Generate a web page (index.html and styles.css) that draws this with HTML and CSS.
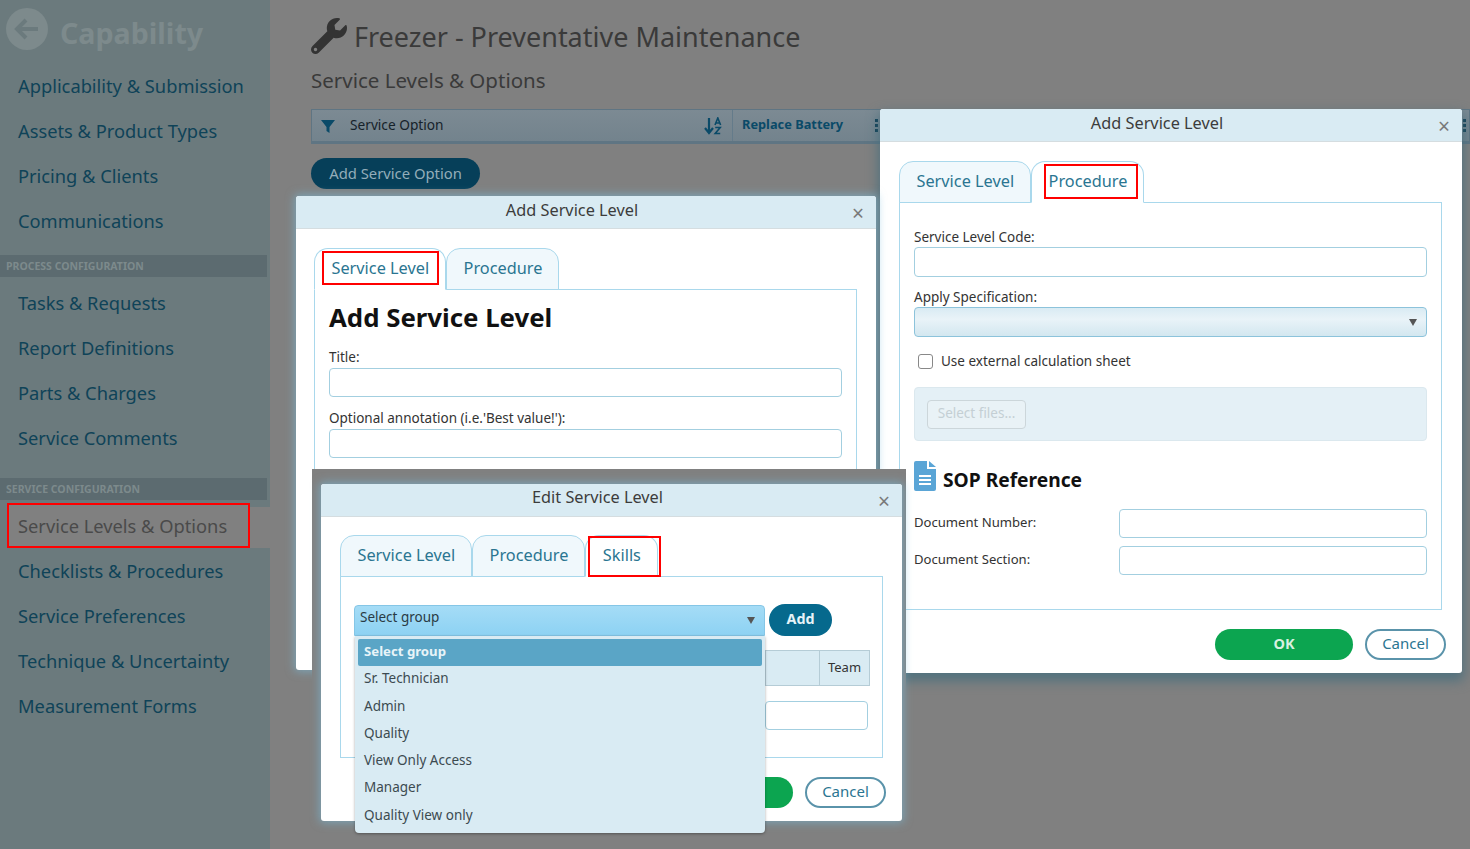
FILE: index.html
```html
<!DOCTYPE html>
<html lang="en">
<head>
<meta charset="utf-8">
<title>Service Levels &amp; Options</title>
<link rel="stylesheet" href="styles.css">
</head>
<body>
<div class="page">
  <aside class="sidebar">
    <div class="brand">
      <svg class="back" viewBox="0 0 42 42" width="42" height="42"><circle cx="21" cy="21" r="21" fill="#7d8a8c"/><path d="M32 21H12M20 12l-9 9 9 9" fill="none" stroke="#6b7a7d" stroke-width="4"/></svg>
      <span class="brand-name">Capability</span>
    </div>
    <nav class="nav-group first">
      <a class="nav-item">Applicability &amp; Submission</a>
      <a class="nav-item">Assets &amp; Product Types</a>
      <a class="nav-item">Pricing &amp; Clients</a>
      <a class="nav-item">Communications</a>
    </nav>
    <div class="nav-head">PROCESS CONFIGURATION</div>
    <nav class="nav-group">
      <a class="nav-item">Tasks &amp; Requests</a>
      <a class="nav-item">Report Definitions</a>
      <a class="nav-item">Parts &amp; Charges</a>
      <a class="nav-item">Service Comments</a>
    </nav>
    <div class="nav-head">SERVICE CONFIGURATION</div>
    <nav class="nav-group">
      <a class="nav-item current">Service Levels &amp; Options</a>
      <a class="nav-item">Checklists &amp; Procedures</a>
      <a class="nav-item">Service Preferences</a>
      <a class="nav-item">Technique &amp; Uncertainty</a>
      <a class="nav-item">Measurement Forms</a>
    </nav>
  </aside>
  <main class="main">
    <h1 class="title">
      <svg viewBox="0 0 512 512" width="36" height="36"><path fill="#333" d="M507.73 109.1c-2.24-9.03-13.54-12.09-20.12-5.51l-74.36 74.36-67.88-11.31-11.31-67.88 74.36-74.36c6.62-6.62 3.43-17.9-5.66-20.16-47.38-11.74-99.55.91-136.58 37.93-39.64 39.64-50.55 97.1-34.05 147.2L18.74 402.76c-24.99 24.99-24.99 65.51 0 90.5 24.99 24.99 65.51 24.99 90.5 0l213.21-213.21c50.12 16.71 107.47 5.68 147.37-34.22 37.07-37.07 49.7-89.32 37.91-136.73zM64 472c-13.25 0-24-10.75-24-24 0-13.26 10.75-24 24-24s24 10.74 24 24c0 13.25-10.75 24-24 24z"/></svg>
      <span>Freezer - Preventative Maintenance</span>
    </h1>
    <h2 class="subtitle">Service Levels &amp; Options</h2>
    <div class="grid-head">
      <svg viewBox="0 0 16 16" width="16" height="16"><path d="M1 2h14L9.500 9v6l-3-2V9z" fill="#0a4a68"/></svg>
      <span class="grid-col">Service Option</span>
      <svg class="sort" viewBox="0 0 18 18" width="18" height="18"><path d="M5 1v14M1 11l4 5 4-5" fill="none" stroke="#0a4a68" stroke-width="2.200"/><path d="M11 8l2.800-7 2.800 7M12 6h3.600M11.200 10.500h5l-5 6h5" fill="none" stroke="#0a4a68" stroke-width="1.600"/></svg>
      <span class="grid-val"><span class="val-text">Replace Battery</span>
        <svg class="kebab" viewBox="0 0 3 14" width="3" height="14"><path d="M0 0h3v3H0zM0 5h3v3H0zM0 10h3v3H0z" fill="#0a3a50"/></svg>
      </span>
      <svg class="kebab end" viewBox="0 0 3 14" width="3" height="14"><path d="M0 0h3v3H0zM0 5h3v3H0zM0 10h3v3H0z" fill="#0a3a50"/></svg>
    </div>
    <button class="primary">Add Service Option</button>
  </main>

  <section class="window win-right">
    <header class="win-title">Add Service Level<span class="close">×</span></header>
    <div class="win-body">
      <div class="tabs">
        <span class="tab">Service Level</span>
        <span class="tab active">Procedure<i class="mark mark-proc"></i></span>
      </div>
      <div class="panel">
        <label class="lbl">Service Level Code:</label>
        <div class="input"></div>
        <label class="lbl">Apply Specification:</label>
        <div class="select"><i class="caret"></i></div>
        <div class="check"><i class="box"></i>Use external calculation sheet</div>
        <div class="upload"><span class="upload-btn">Select files...</span></div>
        <div class="sop">
          <svg viewBox="0 0 22 30" width="22" height="30"><path d="M2 0h11v8h9v20a2 2 0 0 1-2 2H2a2 2 0 0 1-2-2V2a2 2 0 0 1 2-2z" fill="#5aa5d6"/><path d="M15 0l7 6h-7z" fill="#5aa5d6"/><path d="M5 15h12M5 19h12M5 23h12" stroke="#fff" stroke-width="1.800"/></svg>
          <h3>SOP Reference</h3>
        </div>
        <div class="row"><label>Document Number:</label><div class="input"></div></div>
        <div class="row"><label>Document Section:</label><div class="input"></div></div>
      </div>
      <div class="actions">
        <button class="ok">OK</button>
        <button class="cancel">Cancel</button>
      </div>
    </div>
  </section>

  <section class="window win-left">
    <header class="win-title">Add Service Level<span class="close">×</span></header>
    <div class="win-body">
      <div class="tabs">
        <span class="tab active">Service Level<i class="mark mark-level"></i></span>
        <span class="tab">Procedure</span>
      </div>
      <div class="panel">
        <h2 class="panel-title">Add Service Level</h2>
        <label class="lbl">Title:</label>
        <div class="input"></div>
        <label class="lbl">Optional annotation (i.e.'Best value!'):</label>
        <div class="input"></div>
      </div>
    </div>
  </section>

  <div class="patch"></div>

  <section class="window win-edit">
    <header class="win-title">Edit Service Level<span class="close">×</span></header>
    <div class="win-body">
      <div class="tabs">
        <span class="tab">Service Level</span>
        <span class="tab">Procedure</span>
        <span class="tab active">Skills<i class="mark mark-skills"></i></span>
      </div>
      <div class="panel skills">
        <div class="skill-row">
          <div class="select open">Select group<i class="caret"></i></div>
          <button class="add">Add</button>
        </div>
        <div class="team-head"><span>Team</span></div>
        <div class="input team-input"></div>
      </div>
      <div class="actions">
        <button class="ok">OK</button>
        <button class="cancel">Cancel</button>
      </div>
    </div>
    <ul class="dropdown">
      <li class="on">Select group</li>
      <li>Sr. Technician</li>
      <li>Admin</li>
      <li>Quality</li>
      <li>View Only Access</li>
      <li>Manager</li>
      <li>Quality View only</li>
    </ul>
  </section>
</div>
</body>
</html>
```
FILE: styles.css
```css
* { box-sizing: border-box; }
html, body { margin: 0; height: 100%; overflow: hidden; }
body { font-family: "Noto Sans", "Open Sans", sans-serif; background: #808080; color: #333; }
.page { position: relative; display: flex; width: 1470px; height: 849px; overflow: hidden; }

.sidebar { width: 270px; height: 849px; background: #6b7a7d; flex: none; }
.brand { display: flex; align-items: center; gap: 12px; height: 63px; padding: 0 0 0 6px; }
.back { margin-top: -6px; }
.brand-name { font-size: 28.600px; font-weight: 700; color: #7d8a8c; margin-top: 1px; }
.nav-group { display: flex; flex-direction: column; margin-bottom: 18px; }
.nav-group.first { margin-bottom: 12px; }
.nav-item { display: flex; align-items: center; height: 45px; padding-left: 18px; font-size: 18.300px; color: #0f4358; white-space: nowrap; }
.nav-item.current { background: #808080; color: #4a4a4a; outline: 2px solid #f00; outline-offset: -2px; margin-left: 7px; padding-left: 11px; width: 243px; position: relative; }
.nav-item.current::after { content: ""; position: absolute; left: 243px; top: 4px; width: 20px; height: 41px; background: #808080; }
.nav-head { height: 22px; width: 267px; margin-bottom: 3px; background: #5c6b70; color: #7d8a8c; font-size: 10.500px; font-weight: 700; padding-left: 6px; line-height: 22px; }

.main { flex: 1; min-width: 0; padding: 16px 0 0 41px; }
.title { display: flex; align-items: center; gap: 7px; margin: 0; height: 40px; font-size: 27px; font-weight: 400; color: #3a3a3a; }
.subtitle { margin: 9px 0 14px; font-size: 20.500px; line-height: 30px; font-weight: 400; color: #3a3a3a; }
.grid-head { display: flex; align-items: center; height: 35px; padding-left: 8px; border: 1px solid #5f7583; border-bottom-width: 3px; background: linear-gradient(#7c8a93, #73838d); font-size: 13.700px; color: #16222a; }
.grid-col { margin-left: 14px; width: 354px; padding-bottom: 2px; }
.sort { flex: none; width: 18px; margin-right: 10px; }
.grid-val { position: relative; flex: none; width: 146px; border-left: 1px solid #647b8a; height: 100%; display: flex; align-items: center; justify-content: space-between; padding: 0 0 0 9px; font-weight: 700; font-size: 12.800px; color: #0a4a68; }
.val-text { padding-bottom: 4px; }
.kebab { flex: none; }
.kebab.end { margin-left: auto; margin-right: 3px; }
.primary { display: block; margin-top: 14px; width: 169px; height: 31px; padding-bottom: 3px; border: 0; border-radius: 16px; background: #063f59; color: #93adb9; font: 400 14.800px "Noto Sans", sans-serif; }

.window { position: absolute; width: 581px; background: #fff; border-radius: 3px; box-shadow: 0 0 8px 2px rgba(120, 190, 220, .55); }
.win-right { left: 880px; top: 109px; width: 582px; height: 564px; box-shadow: 0 6px 12px 2px rgba(70, 110, 125, .8); }
.win-left { left: 296px; top: 196px; width: 580px; height: 474px; }
.win-edit { left: 321px; top: 484px; height: 337px; }
.patch { position: absolute; left: 312px; top: 469px; width: 594px; height: 369px; background: #808080; }

.win-title { position: relative; height: 33px; padding-right: 28px; background: #d9ebf3; border-bottom: 1px solid #d5dde0; text-align: center; font-size: 16.300px; line-height: 28px; color: #3c3c3c; border-radius: 3px 3px 0 0; }
.win-edit .win-title { line-height: 26px; }
.close { position: absolute; right: 12px; top: 3px; font-size: 21px; color: #7a7a7a; line-height: 29px; }
.win-body { padding: 19px 19px 0 18px; }
.win-right .win-body { padding: 19px 20px 0 19px; }
.win-edit .win-body { padding: 18px 19px 0 19px; }
.tabs { display: flex; height: 42px; position: relative; z-index: 1; }
.tab { position: relative; display: flex; align-items: center; height: 42px; padding: 0 16px 3px 16.500px; border: 1px solid #a9d8ec; border-radius: 14px 14px 0 0; background: #f0f8fc; font-size: 16.300px; color: #2a7591; white-space: nowrap; }
.tab.active { background: #fff; border-bottom-color: #fff; }
.mark { position: absolute; border: 2px solid #f00; }
.mark-level { left: 7px; top: 2px; width: 117px; height: 34px; }
.mark-proc { left: 12px; top: 2px; width: 94px; height: 35px; }
.mark-skills { left: 2px; top: 0; width: 73px; height: 41px; }
.panel { border: 1px solid #a9d8ec; margin-top: -1px; padding: 25px 14px 0; height: 408px; }
.win-left .panel { height: 300px; padding-top: 10px; }
.panel-title { margin: 0 0 14px; font-size: 25.800px; line-height: 34px; font-weight: 700; color: #111; }
.lbl { display: block; font-size: 13.500px; line-height: 18px; color: #333; }
.input { height: 30px; margin: 1px 0 11px; background: #fff; border: 1px solid #a3cfe0; border-radius: 4px; }
.win-left .input { height: 29px; margin: 2px 0 12px; }
.select { position: relative; height: 30px; margin: 1px 0 14px; background: linear-gradient(#d9ebf3, #e9f3f8 40%, #d3e7f0); border: 1px solid #8cc3db; border-radius: 4px; }
.caret { position: absolute; right: 9px; top: 11px; border: 4px solid transparent; border-top: 7px solid #555; border-bottom: 0; }
.check { display: flex; align-items: center; gap: 8px; margin: 0 0 16px 4px; height: 20px; font-size: 13.500px; color: #333; }
.box { width: 15px; height: 15px; border: 1px solid #888; border-radius: 3px; background: #fff; }
.upload { height: 54px; padding: 12px; background: #e4f0f6; border: 1px solid #dbe8ee; border-radius: 4px; }
.upload-btn { display: inline-flex; align-items: center; justify-content: center; width: 99px; height: 29px; padding-bottom: 4px; border: 1px solid #ccd6da; border-radius: 4px; font-size: 13.500px; color: #c4cfd4; background: #e9f2f6; }
.sop { display: flex; align-items: center; gap: 7px; margin: 20px 0 18px; height: 30px; }
.sop h3 { margin: 6px 0 0; font-size: 19.200px; color: #111; }
.row { display: flex; align-items: center; margin-bottom: 8px; }
.row label { width: 205px; font-size: 13.100px; color: #333; margin-top: -3px; }
.row .input { flex: 1; height: 29px; margin: 0; }
.actions { display: flex; justify-content: flex-end; gap: 12px; margin-top: 19px; }
.ok { width: 138px; height: 31px; padding-bottom: 4px; border: 0; border-radius: 16px; background: #0ca550; color: #d8f0e0; font: 700 14.500px "Noto Sans", sans-serif; }
.cancel { width: 81px; height: 31px; padding-bottom: 4px; background: #fff; border: 2px solid #5a93aa; border-radius: 16px; color: #2a7591; font: 400 15px "Noto Sans", sans-serif; }
.win-right .actions { margin-right: -4px; }

.win-edit .panel { height: 182px; padding: 27px 13px 0; position: relative; }
.skill-row { display: flex; gap: 4px; align-items: center; }
.select.open { width: 411px; height: 31px; margin: 0; padding-left: 5px; background: linear-gradient(#a5dcf6, #8dd2f3); border-color: #85c6e6; font-size: 13.500px; line-height: 23px; color: #2a3b44; border-radius: 4px 4px 0 0; }
.add { width: 63px; height: 32px; padding-bottom: 5px; border: 0; border-radius: 16px; background: #06698d; color: #e6f3f8; font: 700 14.300px "Noto Sans", sans-serif; }
.team-head { position: absolute; left: 424px; top: 73px; right: 12px; height: 36px; background: #d9ebf3; border: 1px solid #b5ccd6; display: flex; justify-content: flex-end; }
.team-head span { width: 50px; border-left: 1px solid #b5ccd6; text-align: center; font-size: 13px; line-height: 32px; color: #333; }
.input.team-input { position: absolute; left: 424px; top: 124px; right: 14px; height: 29px; margin: 0; }
.win-edit .actions { margin-top: 19px; margin-right: -3px; }
.dropdown { position: absolute; left: 34px; top: 152px; width: 410px; height: 197px; margin: 0; padding: 3px; list-style: none; background: #d9ebf3; border-radius: 0 0 4px 4px; box-shadow: 0 1px 3px rgba(0,0,0,.35); font-size: 13.500px; color: #3c4a50; }
.dropdown li { height: 27.300px; line-height: 25px; padding-left: 6px; }
.dropdown li.on { background: #5aa5c6; color: #e8f4f8; font-weight: 700; font-size: 13.200px; border-radius: 2px; }
```
